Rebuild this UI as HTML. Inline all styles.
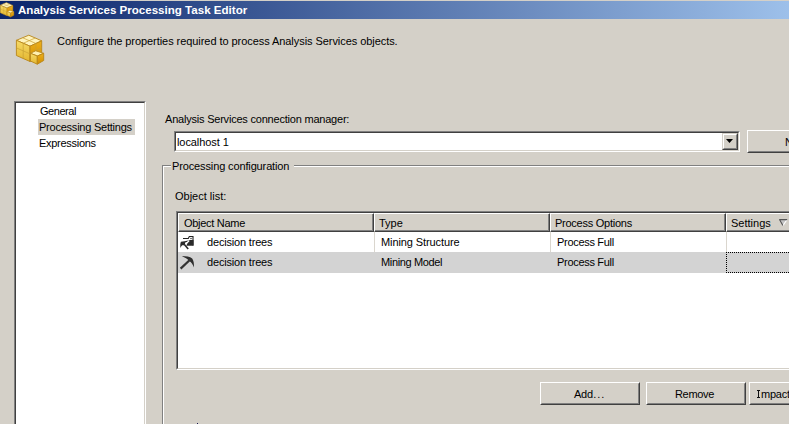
<!DOCTYPE html>
<html><head><meta charset="utf-8">
<style>
html,body{margin:0;padding:0;}
body{width:789px;height:424px;overflow:hidden;position:relative;background:#D4D0C8;font-family:"Liberation Sans",sans-serif;font-size:11px;color:#000;}
.a{position:absolute;}
.t{position:absolute;line-height:12px;white-space:nowrap;}
.sunk{position:absolute;box-sizing:border-box;background:#fff;border:1px solid;border-color:#808080 #fff #fff #808080;}
.sunk>.in{position:absolute;left:0;top:0;right:0;bottom:0;border:1px solid;border-color:#404040 #D4D0C8 #D4D0C8 #404040;}
.btn{position:absolute;box-sizing:border-box;background:#D4D0C8;border:1px solid;border-color:#fff #404040 #404040 #fff;}
.btn>.in{position:absolute;left:0;top:0;right:0;bottom:0;border:1px solid;border-color:#D4D0C8 #808080 #808080 #D4D0C8;}
.hdr{position:absolute;top:213px;height:19px;box-sizing:border-box;background:#D4D0C8;border:1px solid;border-color:#fff #404040 #404040 #fff;}
.hdr>.in{position:absolute;left:0;top:0;right:0;bottom:0;border-right:1px solid #808080;border-bottom:1px solid #808080;}
</style></head><body>

<!-- title bar -->
<div class="a" style="left:0;top:1px;width:789px;height:18px;background:linear-gradient(to right,#0A246A,#9DC0EA);"></div>
<div class="t" style="left:18px;top:4px;color:#fff;font-weight:bold;transform:scaleX(1.051);transform-origin:0 0;">Analysis Services Processing Task Editor</div>

<svg class="a" style="left:-1px;top:1px" width="16" height="17" viewBox="0 0 32 34">
<defs>
<linearGradient id="lfb" x1="0" y1="0" x2="0" y2="1"><stop offset="0" stop-color="#F6DA66"/><stop offset="1" stop-color="#E4B630"/></linearGradient>
<linearGradient id="rfb" x1="0" y1="0" x2="0" y2="1"><stop offset="0" stop-color="#EEB01A"/><stop offset="1" stop-color="#CF8C00"/></linearGradient>
</defs>
<g stroke="#B8861A" stroke-width="0.9" stroke-linejoin="round">
<polygon points="14.8,3.2 27.7,8.8 16,14.2 2.4,8.3" fill="#FFF3BC"/>
<polygon points="2.4,8.3 16,14.2 16,29.5 2.4,23.5" fill="url(#lfb)"/>
<polygon points="16,14.2 27.7,8.8 27.7,23 16,29.5" fill="url(#rfb)"/>
<path d="M8.6,5.75 L22,11.5 M21.25,6 L9.2,11.25 M9.2,11.25 V26.5 M2.4,15.9 L16,21.85 M21.85,11.5 V26.25 M16,21.85 L27.7,15.9" fill="none" stroke="#C9A032" stroke-width="0.7"/>
<polygon points="16.4,21.3 21.7,18.8 29.7,21.3 23.3,24" fill="#FFF0B0"/>
<polygon points="16.4,21.3 23.3,24 23.3,32.2 16.4,29" fill="url(#lfb)"/>
<polygon points="23.3,24 29.7,21.3 29.7,28.5 23.3,32.2" fill="url(#rfb)"/>
</g></svg>
<!-- header -->
<svg class="a" style="left:14px;top:32px" width="32" height="34" viewBox="0 0 32 34">
<defs>
<linearGradient id="lfa" x1="0" y1="0" x2="0" y2="1"><stop offset="0" stop-color="#F6DA66"/><stop offset="1" stop-color="#E4B630"/></linearGradient>
<linearGradient id="rfa" x1="0" y1="0" x2="0" y2="1"><stop offset="0" stop-color="#EEB01A"/><stop offset="1" stop-color="#CF8C00"/></linearGradient>
</defs>
<g stroke="#B8861A" stroke-width="0.9" stroke-linejoin="round">
<polygon points="14.8,3.2 27.7,8.8 16,14.2 2.4,8.3" fill="#FFF3BC"/>
<polygon points="2.4,8.3 16,14.2 16,29.5 2.4,23.5" fill="url(#lfa)"/>
<polygon points="16,14.2 27.7,8.8 27.7,23 16,29.5" fill="url(#rfa)"/>
<path d="M8.6,5.75 L22,11.5 M21.25,6 L9.2,11.25 M9.2,11.25 V26.5 M2.4,15.9 L16,21.85 M21.85,11.5 V26.25 M16,21.85 L27.7,15.9" fill="none" stroke="#C9A032" stroke-width="0.7"/>
<polygon points="16.4,21.3 21.7,18.8 29.7,21.3 23.3,24" fill="#FFF0B0"/>
<polygon points="16.4,21.3 23.3,24 23.3,32.2 16.4,29" fill="url(#lfa)"/>
<polygon points="23.3,24 29.7,21.3 29.7,28.5 23.3,32.2" fill="url(#rfa)"/>
</g></svg>
<div class="t" style="left:57px;top:35px;letter-spacing:-0.06px;">Configure the properties required to process Analysis Services objects.</div>

<!-- left listbox -->
<div class="sunk" style="left:14px;top:101px;width:132px;height:340px;"><div class="in"></div></div>
<div class="a" style="left:38px;top:119px;width:97px;height:16px;background:#D4D0C8;"></div>
<div class="t" style="left:40px;top:105px;letter-spacing:-0.45px;">General</div>
<div class="t" style="left:39px;top:121px;letter-spacing:-0.23px;">Processing Settings</div>
<div class="t" style="left:39px;top:137px;letter-spacing:-0.28px;">Expressions</div>

<!-- connection manager -->
<div class="t" style="left:165px;top:113px;letter-spacing:-0.21px;">Analysis Services connection manager:</div>
<div class="sunk" style="left:174px;top:131px;width:566px;height:21px;"><div class="in"></div></div>
<div class="t" style="left:177px;top:136px;letter-spacing:-0.08px;">localhost 1</div>
<div class="btn" style="left:722px;top:133px;width:16px;height:17px;border-color:#D4D0C8 #404040 #404040 #D4D0C8;"><div class="in" style="border-color:#fff #808080 #808080 #fff;"></div></div>
<svg class="a" style="left:726px;top:139px" width="7" height="4"><path d="M0 0H7L3.5 4Z" fill="#000"/></svg>
<div class="btn" style="left:747px;top:130px;width:100px;height:23px;"><div class="in"></div></div>
<div class="t" style="left:785px;top:136px;">New...</div>

<!-- group box -->
<div class="a" style="left:162px;top:165px;width:700px;height:400px;border-top:1px solid #808080;border-left:1px solid #808080;"></div>
<div class="a" style="left:163px;top:166px;width:700px;height:400px;border-top:1px solid #fff;border-left:1px solid #fff;"></div>
<div class="t" style="left:171px;top:160px;padding:0 5px 0 1px;background:#D4D0C8;letter-spacing:-0.13px;">Processing configuration</div>

<div class="t" style="left:175px;top:190px;">Object list:</div>

<!-- table -->
<div class="sunk" style="left:176px;top:211px;width:700px;height:159px;"><div class="in"></div></div>
<div class="hdr" style="left:178px;width:196px;"><div class="in"></div></div>
<div class="hdr" style="left:374px;width:176px;"><div class="in"></div></div>
<div class="hdr" style="left:550px;width:176px;"><div class="in"></div></div>
<div class="hdr" style="left:726px;width:176px;"><div class="in"></div></div>
<div class="t" style="left:184px;top:217px;letter-spacing:-0.29px;">Object Name</div>
<div class="t" style="left:379px;top:217px;">Type</div>
<div class="t" style="left:555px;top:217px;letter-spacing:-0.25px;">Process Options</div>
<div class="t" style="left:731px;top:217px;">Settings</div>
<svg class="a" style="left:778px;top:218px" width="11" height="9" viewBox="0 0 11 9"><polygon points="1.5,1.6 9,1.6 4.9,7.6" fill="#C4C4C4"/><path d="M9,1.6 L4.9,7.6" stroke="#fff" stroke-width="1.1" fill="none"/><path d="M1.2,1.6 H9.2 M1.5,1.6 L4.9,7.6" stroke="#555" stroke-width="1.1" fill="none"/></svg>

<!-- rows -->
<div class="a" style="left:178px;top:252px;width:620px;height:21px;background:#D3D3D3;"></div>
<div class="a" style="left:726px;top:252px;width:100px;height:21px;box-sizing:border-box;background-image:linear-gradient(to right,#000 50%,transparent 50%),linear-gradient(to right,#000 50%,transparent 50%),linear-gradient(to bottom,#000 50%,transparent 50%);background-size:2px 1px,2px 1px,1px 2px;background-repeat:repeat-x,repeat-x,repeat-y;background-position:0 0,0 20px,0 0;"></div>
<div class="a" style="left:374px;top:232px;width:1px;height:20px;background:#DAD6CE;"></div>
<div class="a" style="left:550px;top:232px;width:1px;height:20px;background:#DAD6CE;"></div>
<div class="a" style="left:726px;top:232px;width:1px;height:20px;background:#DAD6CE;"></div>
<svg class="a" style="left:178px;top:233px" width="18" height="18" viewBox="0 0 18 18">
<path d="M5,5.5 H10.3 L11.3,3.5 H15 V12.5" stroke="#222" stroke-width="1.1" fill="none"/>
<path d="M10.5,7 H15.5 V12.8 H8.3 L9.2,10.2 Z" fill="#2a2a2a"/>
<circle cx="13" cy="5.5" r="0.75" fill="#333"/>
<path d="M2.9,8.8 L6.5,8.2 L10.4,7.4 L10.6,8.5 L7.2,9.6 L6.8,12.2 L4.2,12.2 C3.4,12.9 2.8,13.8 2.5,15 C2.1,13 2.2,10.5 2.9,8.8 Z" fill="#2a2a2a"/>
<path d="M11.2,7.5 L6.5,12.6" stroke="#fff" stroke-width="1.2" fill="none"/>
<path d="M6.2,11.2 L10.2,16" stroke="#2a2a2a" stroke-width="1.6" fill="none"/>
</svg>
<svg class="a" style="left:178px;top:253px" width="18" height="18" viewBox="0 0 18 18">
<path d="M3.8,3.1 C8,3.1 12,3.9 14.2,5.4 C15.6,7.3 16.2,10.5 15.9,14.6 C14.9,11.6 13.6,9.4 11.4,7.9 C9.4,6.3 7,4.6 3.8,3.1 Z" fill="#2e2e2e"/>
<path d="M12.6,6.2 L2.6,15.6" stroke="#333" stroke-width="2.2" fill="none"/>
</svg>
<div class="t" style="left:207px;top:236px;letter-spacing:-0.18px;">decision trees</div>
<div class="t" style="left:381px;top:236px;letter-spacing:-0.1px;">Mining Structure</div>
<div class="t" style="left:557px;top:236px;letter-spacing:-0.31px;">Process Full</div>
<div class="t" style="left:207px;top:256px;letter-spacing:-0.18px;">decision trees</div>
<div class="t" style="left:381px;top:256px;letter-spacing:-0.36px;">Mining Model</div>
<div class="t" style="left:557px;top:256px;letter-spacing:-0.31px;">Process Full</div>

<!-- buttons -->
<div class="btn" style="left:540px;top:382px;width:100px;height:23px;"><div class="in"></div></div>
<div class="t" style="left:574px;top:388px;"><span style="letter-spacing:-0.25px">Add</span><span style="letter-spacing:1px;margin-left:0.3px">...</span></div>
<div class="btn" style="left:646px;top:382px;width:100px;height:23px;"><div class="in"></div></div>
<div class="t" style="left:675px;top:388px;letter-spacing:-0.33px;">Remove</div>
<div class="btn" style="left:749px;top:382px;width:100px;height:23px;"><div class="in"></div></div>
<div class="a" style="left:757px;top:390px;width:3px;height:1px;background:#111;"></div><div class="a" style="left:758px;top:390px;width:1px;height:8px;background:#111;"></div><div class="a" style="left:757px;top:397px;width:3px;height:1px;background:#111;"></div>
<div class="t" style="left:761px;top:388px;letter-spacing:-0.25px;">mpact Analysis...</div>

<div class="a" style="left:197px;top:423px;width:1px;height:1px;background:#1a1a50;"></div>
</body></html>
